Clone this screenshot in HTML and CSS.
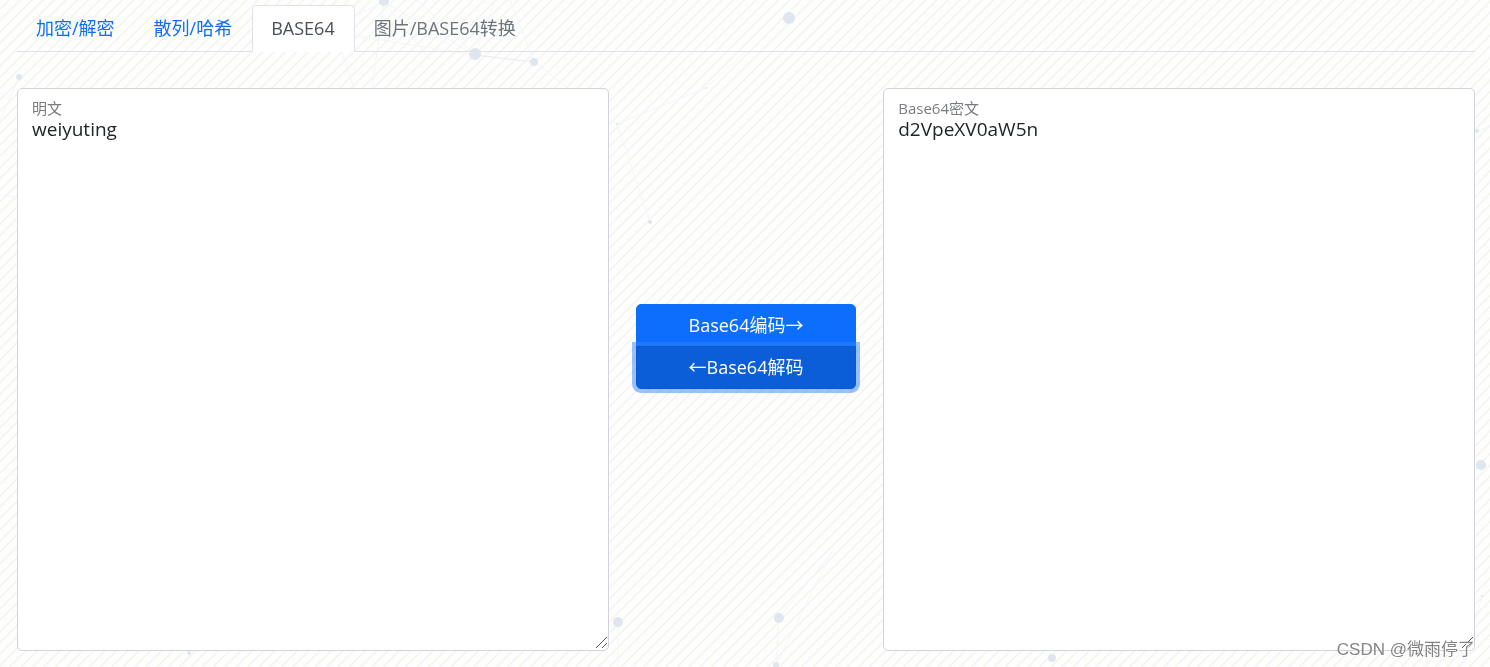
FILE: index.html
```html
<!DOCTYPE html>
<html lang="zh-CN">
<head>
<meta charset="utf-8">
<title>BASE64</title>
<link rel="stylesheet" href="styles.css">
</head>
<body>
<svg class="particles" aria-hidden="true">
  <g class="links">
    <path d="M384 2 475 55M384 2 357 15M384 2 372 88M335 30 354 88M384 2 430 60M475 55 495 0M475 55 350 35M510 0 534 62M534 62 568 88M417 0 475 55"/>
    <path class="strong" d="M475 55 534 62"/>
    <path d="M617 124 706 88 745 52M617 124 609 119M617 124 650 222"/>
    <path d="M19 77 0 120M19 77 45 90M0 195 17 197"/>
    <path d="M618 622V667M779 618 832 552M779 618 776 665M776 665 832 552M1481 465 1490 467M1482 596 1475 622M1477 131 1490 127M1460 667 1475 645"/>
  </g>
  <g class="nodes">
    <circle cx="384" cy="1" r="5"/>
    <circle cx="475" cy="54" r="6"/>
    <circle cx="534" cy="62" r="4"/>
    <circle cx="789" cy="18" r="6"/>
    <circle cx="19" cy="77" r="3"/>
    <circle cx="617" cy="124" r="1"/>
    <circle cx="706" cy="88" r="1"/>
    <circle cx="650" cy="222" r="2"/>
    <circle cx="618" cy="622" r="5"/>
    <circle cx="779" cy="618" r="5"/>
    <circle cx="776" cy="665" r="3"/>
    <circle cx="1052" cy="658" r="4"/>
    <circle cx="189" cy="653" r="2"/>
    <circle cx="1481" cy="465" r="5"/>
    <circle cx="1477" cy="131" r="2"/>
    <circle cx="1482" cy="596" r="1"/>
  </g>
</svg>
<nav class="tabs">
  <a class="tab" href="#crypt">加密/解密</a>
  <a class="tab" href="#hash">散列/哈希</a>
  <a class="tab active" href="#base64" aria-current="page">BASE64</a>
  <a class="tab muted" href="#image">图片/BASE64转换</a>
</nav>
<main class="row">
  <div class="field">
    <textarea id="plain" class="text" spellcheck="false">weiyuting</textarea>
    <label class="label" for="plain">明文</label>
  </div>
  <div class="actions">
    <button class="btn" type="button">Base64编码→</button>
    <button class="btn pressed" type="button">←Base64解码</button>
  </div>
  <div class="field">
    <textarea id="cipher" class="text" spellcheck="false">d2VpeXV0aW5n</textarea>
    <label class="label" for="cipher">Base64密文</label>
  </div>
</main>
<div class="watermark">CSDN @微雨停了</div>
</body>
</html>
```
FILE: styles.css
```css
* {
  box-sizing: border-box;
}

body {
  display: flex;
  flex-direction: column;
  gap: 36px;
  min-height: 100vh;
  margin: 0;
  padding: 5px 15px 16px 17px;
  background: #fefefe repeating-linear-gradient(135deg, #fefefe 0, #fefefe 5px, #f6f6f0 6px, #f6f6f0 7px, #fefefe 8px);
  color: #212529;
  font: 18px/27px "Open Sans", "Noto Sans CJK SC", sans-serif;
}

.particles {
  position: fixed;
  inset: 0;
  z-index: -1;
  width: 100%;
  height: 100%;
}

.links {
  fill: none;
  stroke: #f3f5f9;
}

.links .strong {
  stroke: #e6eaf1;
}

.nodes {
  fill: #e0e6ee;
}

.tabs {
  display: flex;
  border-bottom: 1px solid #dee2e6;
}

.tab {
  margin-bottom: -1px;
  padding: 9px 19px 9px 18px;
  border: 1px solid transparent;
  border-radius: 5px 5px 0 0;
  color: #0d6efd;
  text-decoration: none;
}

.tab.active {
  border-color: #dee2e6 #dee2e6 #fff;
  background: #fff;
  color: #495057;
}

.tab.muted {
  color: #6c757d;
}

.row {
  display: grid;
  flex: 1;
  grid-template-columns: repeat(12, 1fr);
  gap: 27px;
}

.field {
  position: relative;
  display: flex;
  grid-column: span 5;
}

.text {
  flex: 1;
  min-width: 0;
  padding: 27px 14px 11px;
  border: 1px solid #ced4da;
  border-radius: 5px;
  outline: 0;
  background: #fff;
  color: inherit;
  font: inherit;
  font-size: 19px;
  resize: vertical;
}

.text::-webkit-resizer {
  background: linear-gradient(135deg, transparent 47%, #555 47%, #555 52%, transparent 52%, transparent 73%, #555 73%, #555 78%, transparent 78%) 3px 2px / 11px 11px no-repeat;
}

.label {
  position: absolute;
  top: 8px;
  left: 15px;
  color: #7a7c7f;
  font-size: 15px;
  line-height: 24px;
  pointer-events: none;
}

.actions {
  display: flex;
  flex-direction: column;
  grid-column: span 2;
  padding-top: 216px;
}

.btn {
  padding: 7px 14px;
  border: 1px solid #0d6efd;
  border-radius: 5px 5px 0 0;
  background: #0d6efd;
  color: #fff;
  font: inherit;
}

.btn.pressed {
  z-index: 1;
  margin-top: -1px;
  border-color: #0a58ca;
  border-radius: 0 0 5px 5px;
  background: #0b5ed7;
  box-shadow: 0 0 0 4px rgba(49, 132, 253, 0.5);
}

.watermark {
  position: fixed;
  right: 15px;
  bottom: 4px;
  z-index: 2;
  color: rgba(110, 110, 110, 0.85);
  font: 17px/27px "Liberation Sans", "Noto Sans CJK SC", sans-serif;
  text-shadow: 1px 1px 1px #fff;
  pointer-events: none;
}
```
